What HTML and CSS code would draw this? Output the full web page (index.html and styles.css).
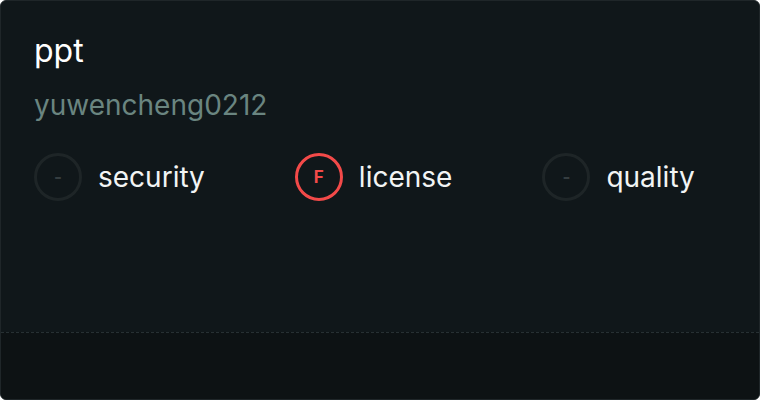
FILE: index.html
```html
<!doctype html>
<html>
<head>
<meta charset="utf-8">
<title>ppt</title>
<link rel="stylesheet" href="styles.css">
</head>
<body>
<div class="card">
    <div class="cardBody">
        <div class="repoName">ppt</div>
        <div class="owner">yuwencheng0212</div>
        <ul class="grades">
            <li class="grade"><span class="badge none">-</span><span class="label">security</span></li>
            <li class="grade"><span class="badge fail">F</span><span class="label">license</span></li>
            <li class="grade"><span class="badge none">-</span><span class="label">quality</span></li>
        </ul>
    </div>
    <div class="cardFoot"></div>
</div>
</body>
</html>
```
FILE: styles.css
```css
html, body{
    margin: 0;
    padding: 0;
    background: #ffffff;
}
body{
    font-family: Inter, "Noto Sans", sans-serif;
}
.card{
    width: 760px;
    height: 400px;
    box-sizing: border-box;
    border: 1px solid #1f2629;
    border-radius: 6px;
    background-color: #10171a;
    display: flex;
    flex-direction: column;
    overflow: hidden;
}
.cardBody{
    flex: 1;
    padding: 30px 33px 0 33px;
}
.repoName{
    color: #ffffff;
    font-size: 32px;
    line-height: 40px;
}
.owner{
    color: #6a8580;
    font-size: 28px;
    line-height: 36px;
    margin-top: 16px;
}
.grades{
    list-style: none;
    margin: 30px 0 0 0;
    padding: 0;
    display: flex;
    gap: 90px;
}
.grade{
    display: flex;
    align-items: center;
    gap: 16px;
}
.badge{
    width: 48px;
    height: 48px;
    box-sizing: border-box;
    border-radius: 50%;
    border: 3px solid #1e2527;
    display: flex;
    align-items: center;
    justify-content: center;
    font-size: 17px;
    font-weight: 700;
}
.badge.none{
    color: #353d40;
}
.badge.fail{
    border-color: #f34a49;
    color: #f34a49;
}
.label{
    color: #f2f4f4;
    font-size: 28px;
    line-height: 36px;
}
.cardFoot{
    height: 66px;
    border-top: 1px dashed #273033;
    background-color: #0d1214;
}
```
